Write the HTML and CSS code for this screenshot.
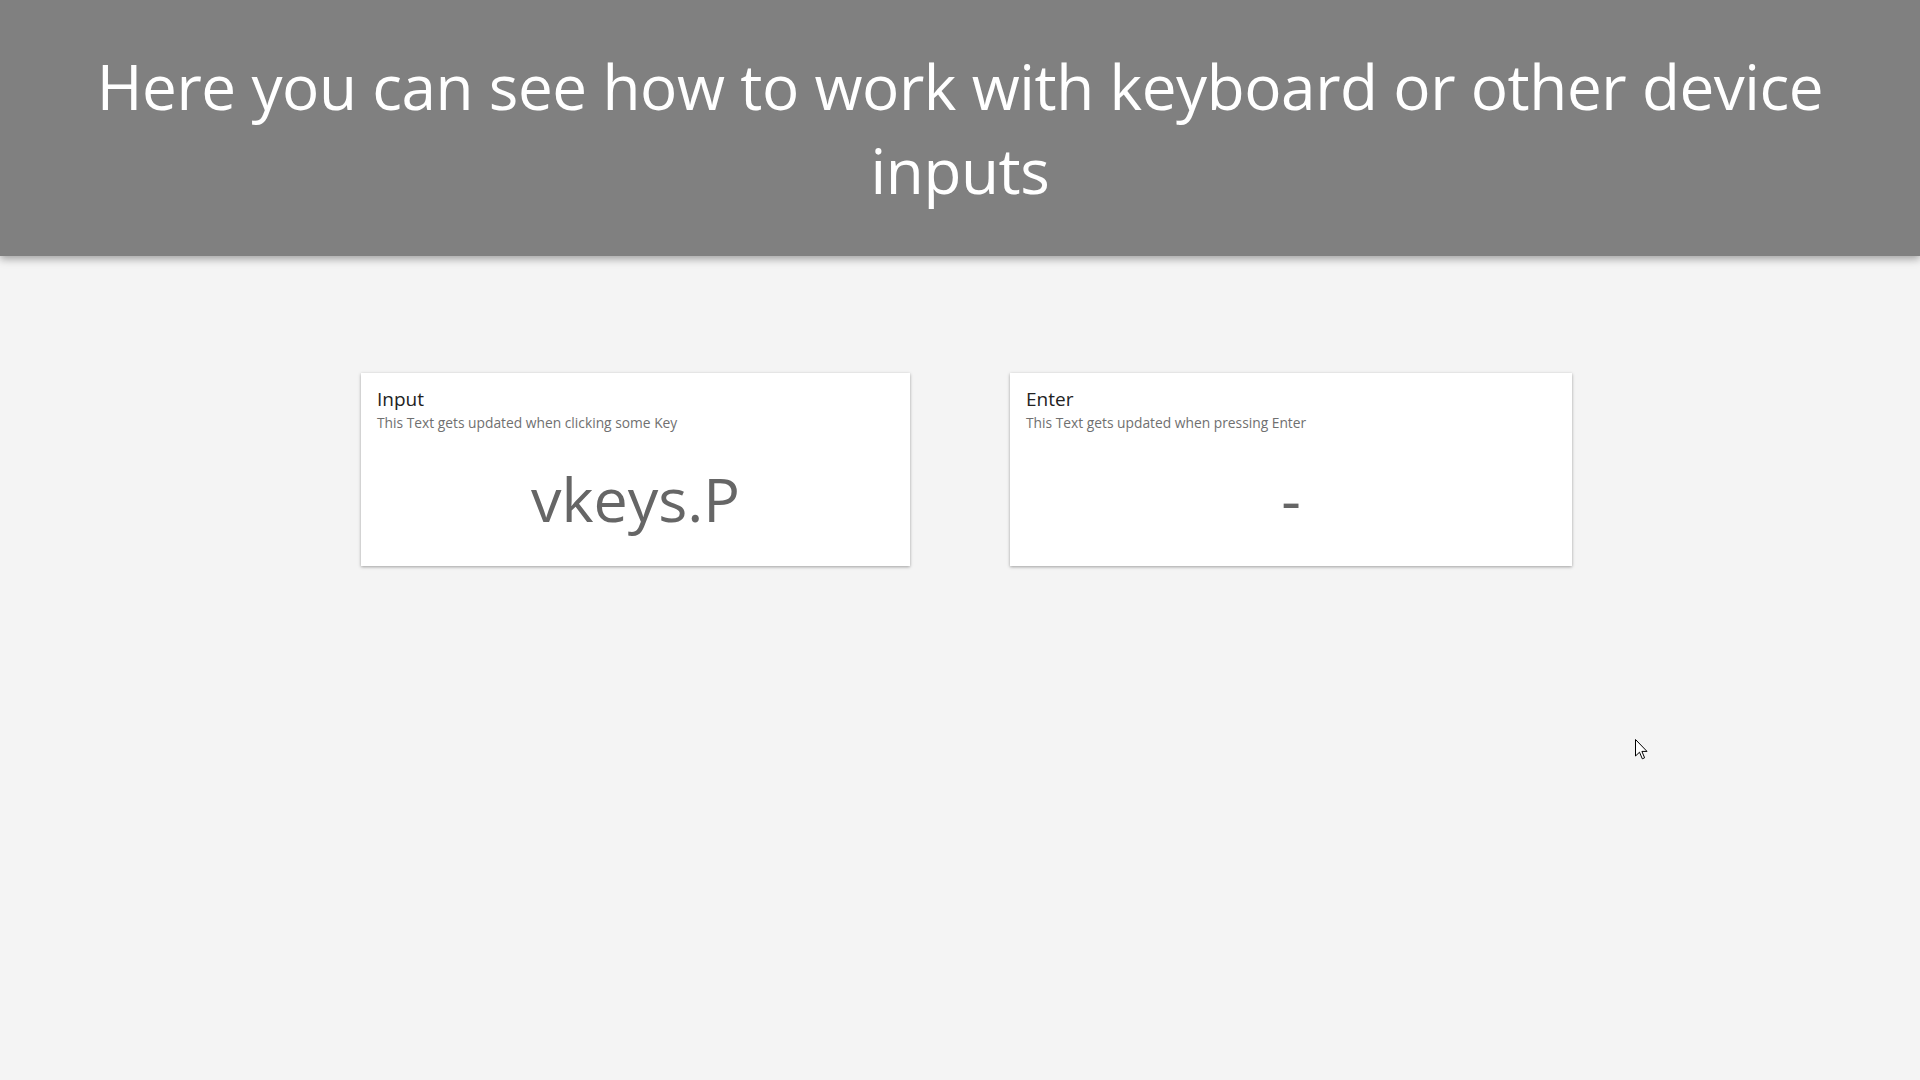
FILE: index.html
```html
<!DOCTYPE html>
<html lang="en">
<head>
<meta charset="utf-8">
<title>Keyboard input</title>
<link rel="stylesheet" href="styles.css">
</head>
<body>
<header class="banner">
  <h1 class="banner-title">Here you can see how to work with keyboard or other device inputs</h1>
</header>
<main class="cards">
  <section class="card card-input">
    <h2 class="card-title">Input</h2>
    <p class="card-sub">This Text gets updated when clicking some Key</p>
    <div class="card-value">vkeys.P</div>
  </section>
  <section class="card card-enter">
    <h2 class="card-title">Enter</h2>
    <p class="card-sub">This Text gets updated when pressing Enter</p>
    <div class="card-value">-</div>
  </section>
</main>
<svg class="cursor" width="13" height="21" viewBox="0 0 13 21" aria-hidden="true">
  <path d="M0.5 0.5 L0.5 17 L4.5 13.2 L7.3 19.8 L9.6 18.8 L6.9 12.4 L12 12.4 Z" fill="#fff" stroke="#000" stroke-width="1" stroke-linejoin="miter"/>
</svg>
</body>
</html>
```
FILE: styles.css
```css
html, body {
  margin: 0;
  padding: 0;
}
body {
  background: #f4f4f4;
  font-family: "Open Sans", "Noto Sans", "Liberation Sans", sans-serif;
  width: 1920px;
  height: 1080px;
  overflow: hidden;
  position: relative;
}
.banner {
  background: #808080;
  height: 256px;
  box-sizing: border-box;
  padding-top: 44px;
  box-shadow: 0 3px 8px rgba(0, 0, 0, 0.35);
  position: relative;
  z-index: 1;
}
.banner-title {
  margin: 0 auto;
  width: 1760px;
  color: #ffffff;
  font-weight: 400;
  font-size: 62px;
  letter-spacing: -0.42px;
  line-height: 84px;
  text-align: center;
}
.cards {
  display: flex;
  gap: 100px;
  padding-left: 361px;
  margin-top: 117px;
}
.card {
  background: #ffffff;
  height: 193px;
  box-sizing: border-box;
  padding: 13px 16px 0;
  box-shadow: 0 1px 3px rgba(0, 0, 0, 0.35);
  display: flex;
  flex-direction: column;
}
.card-input { width: 549px; }
.card-enter { width: 562px; }
.card-title {
  margin: 0;
  font-size: 19px;
  font-weight: 400;
  line-height: 27px;
  color: #222222;
}
.card-sub {
  margin: 0;
  font-size: 13.8px;
  line-height: 19px;
  color: #707070;
}
.card-value {
  flex: 1;
  display: flex;
  align-items: center;
  justify-content: center;
  font-size: 61px;
  color: #666666;
  padding-bottom: 2px;
}
.cursor {
  position: absolute;
  left: 1635px;
  top: 739px;
}
```
